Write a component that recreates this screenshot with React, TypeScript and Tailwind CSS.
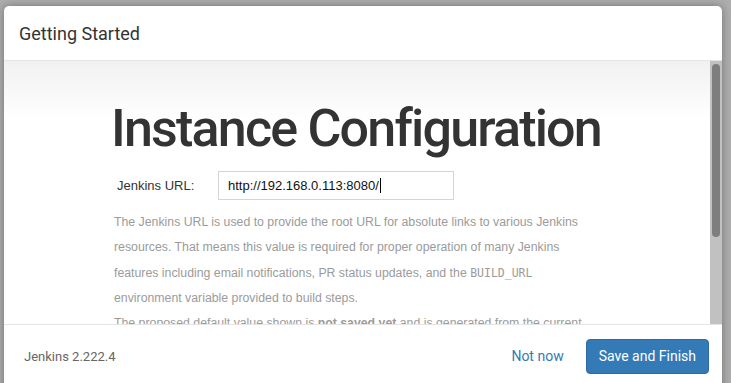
import React from "react";

const App = () => {
  return (
    <div className="h-[383px] w-[731px] overflow-hidden bg-[#adadad] pt-[6px] pl-[4px] pr-[9px]">
      <div className="flex h-[420px] flex-col rounded-t-[5px] bg-white shadow-[0_0_8px_rgba(0,0,0,0.35)]">
        {/* header */}
        <div className="flex h-[55px] items-center border-b border-[#e5e5e5] pl-[15px] font-['Roboto',sans-serif] text-[18px] text-[#333]">
          Getting Started
        </div>

        {/* body */}
        <div className="flex h-[263px] overflow-hidden">
          <div className="flex-1 overflow-hidden bg-[linear-gradient(to_bottom,#f1f1f1,#ffffff_60px)]">
            <div className="mx-auto w-[492px] pt-[42px]">
              <h1 className="whitespace-nowrap font-['Roboto',sans-serif] text-[52px] font-medium leading-none tracking-[-1.8px] text-[#333]">
                Instance Configuration
              </h1>
              <div className="mt-[16px] flex items-center font-['Liberation_Sans',sans-serif] text-[13px]">
                <label className="w-[107px] pl-[6px] text-[#333]">Jenkins URL:</label>
                <div className="flex h-[29px] w-[236px] items-center border border-[#d5d5d5] bg-white px-[9px] text-[#111]">
                  http://192.168.0.113:8080/
                  <span className="ml-[1px] inline-block h-[15px] w-px bg-black" />
                </div>
              </div>
              <div className="mt-[10px] whitespace-nowrap pl-[3px] font-['Liberation_Sans',sans-serif] text-[12.3px] leading-[25.3px] text-[#9b9b9b]">
                <p>
                  The Jenkins URL is used to provide the root URL for absolute links to various Jenkins
                  <br />
                  resources. That means this value is required for proper operation of many Jenkins
                  <br />
                  features including email notifications, PR status updates, and the{" "}
                  <code className="font-['DejaVu_Sans_Mono',monospace] text-[11.5px]">BUILD_URL</code>
                  <br />
                  environment variable provided to build steps.
                </p>
                <p>
                  The proposed default value shown is <strong className="font-bold">not saved yet</strong> and is
                  generated from the current
                  <br />
                  request, if possible. The best practice is to set this value to the URL that users are
                </p>
              </div>
            </div>
          </div>
          {/* scrollbar */}
          <div className="w-[12px] bg-[#c1c1c1] px-[2px] pt-[3px]">
            <div className="h-[173px] rounded-full bg-[#7e7e7e]" />
          </div>
        </div>

        {/* footer */}
        <div className="flex h-[64px] items-center border-t border-[#e5e5e5] pl-[20px] pr-[13px] font-['Roboto',sans-serif]">
          <span className="text-[13px] text-[#666]">Jenkins 2.222.4</span>
          <div className="ml-auto flex items-center gap-[22px]">
            <a className="text-[14px] text-[#337ab7]">Not now</a>
            <button className="h-[35px] rounded-[4px] border border-[#2e6da4] bg-[#337ab7] px-[12px] text-[14px] text-white">
              Save and Finish
            </button>
          </div>
        </div>
      </div>
    </div>
  );
};

export default App;
